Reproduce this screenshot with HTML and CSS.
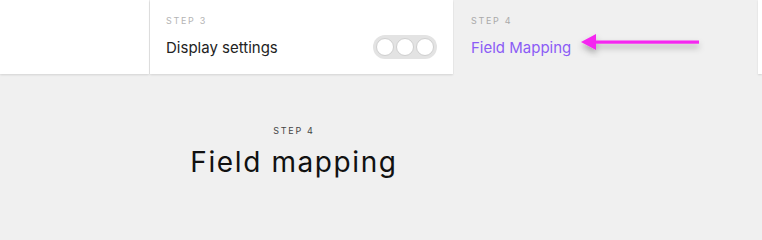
FILE: index.html
```html
<!DOCTYPE html>
<html>
<head>
<meta charset="utf-8">
<link rel="stylesheet" href="styles.css">
</head>
<body>
<div class="steps">
  <div class="card card-first"></div>
  <div class="card card-step">
    <div class="step-label">STEP 3</div>
    <div class="step-row">
      <span class="step-title">Display settings</span>
      <span class="toggle"><i></i><i></i><i></i></span>
    </div>
  </div>
  <div class="card card-active">
    <div class="step-label">STEP 4</div>
    <div class="step-row">
      <span class="step-title active-title">Field Mapping</span>
    </div>
    <svg class="arrow" width="130" height="30" viewBox="0 0 130 30">
      <defs>
        <filter id="sh" x="-20%" y="-80%" width="140%" height="260%">
          <feDropShadow dx="0" dy="4" stdDeviation="3" flood-color="#000" flood-opacity="0.3"/>
        </filter>
      </defs>
      <g filter="url(#sh)">
        <rect x="18" y="12.5" width="104" height="3.2" fill="#f526f0"/>
        <polygon points="4,14 19,6 19,22" fill="#f526f0"/>
      </g>
    </svg>
  </div>
  <div class="card card-last"></div>
</div>
<div class="main">
  <div class="main-head">
    <div class="main-step">STEP 4</div>
    <h1 class="main-title">Field mapping</h1>
  </div>
</div>
</body>
</html>
```

FILE: styles.css
```css
html, body {
  margin: 0;
  padding: 0;
  background: #f0f0f0;
  font-family: "Inter", "Noto Sans", sans-serif;
}
.steps {
  display: flex;
  gap: 1px;
  height: 74px;
}
.card {
  background: #fff;
  box-shadow: 0 1px 2px rgba(0,0,0,0.12);
  box-sizing: border-box;
  position: relative;
}
.card-first { width: 149px; }
.card-step { width: 303px; padding: 15px 16px 0 16px; }
.card-active {
  width: 303px;
  background: #f0f0f0;
  box-shadow: none;
  padding: 15px 17px 0 17px;
}
.card-last { flex: 1; }
.step-label {
  font-size: 9px;
  letter-spacing: 1.7px;
  color: #b4b4b4;
  line-height: 12px;
}
.card-active .step-label { color: #aaaaaa; }
.step-row {
  display: flex;
  align-items: center;
  justify-content: space-between;
  margin-top: 8px;
  height: 24px;
}
.step-title {
  font-size: 15px;
  color: #222;
}
.active-title { color: #8b5cf6; }
.toggle {
  display: flex;
  gap: 2px;
  background: #e3e3e3;
  border-radius: 12px;
  padding: 3px;
}
.toggle i {
  width: 16px;
  height: 16px;
  border: 1px solid #cfcfcf;
  background: #fff;
  border-radius: 50%;
  display: block;
}
.arrow {
  position: absolute;
  left: 123px;
  top: 28px;
}
.main {
  padding-top: 51px;
}
.main-head {
  width: 588px;
  text-align: center;
}
.main-step {
  font-size: 9px;
  letter-spacing: 1.7px;
  color: #444;
  line-height: 12px;
}
.main-title {
  margin: 8px 0 0 0;
  font-weight: 400;
  font-size: 28px;
  letter-spacing: 1.6px;
  color: #111;
  line-height: 34px;
}
```
